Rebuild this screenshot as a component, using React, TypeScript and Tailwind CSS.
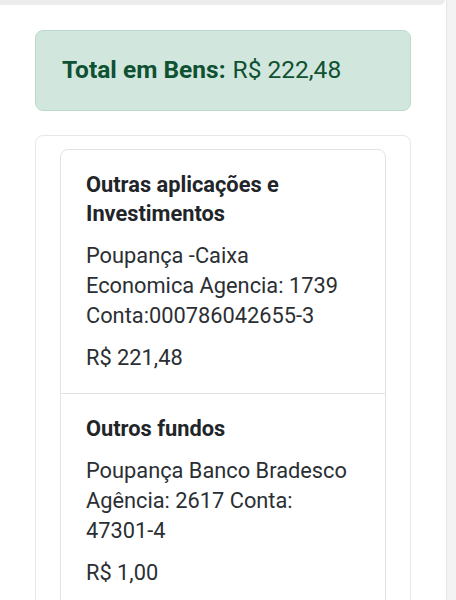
import { type FC } from 'react';

type Bem = {
    tipo: string;
    descricao: string;
    valor: string;
};

const bens: Bem[] = [
    {
        tipo: 'Outras aplicações e Investimentos',
        descricao: 'Poupança -Caixa Economica Agencia: 1739 Conta:000786042655-3',
        valor: 'R$ 221,48',
    },
    {
        tipo: 'Outros fundos',
        descricao: 'Poupança Banco Bradesco Agência: 2617 Conta: 47301-4',
        valor: 'R$ 1,00',
    },
];

const BemItem: FC<{ bem: Bem }> = ({ bem }) => (
    <li className="pl-[25px] pr-[28px] pt-[20px] pb-[20px]">
        <h3 className="text-[21.8px] leading-[29px] font-bold text-[#212529] w-[230px]">
            {bem.tipo}
        </h3>
        <p className="mt-[13px] text-[21.8px] leading-[30px] text-[#2b2f33]">
            {bem.descricao}
        </p>
        <p className="mt-[12px] text-[21.8px] leading-[30px] text-[#2b2f33]">
            {bem.valor}
        </p>
    </li>
);

export default function App() {
    return (
        <div
            className="w-[456px] h-[600px] overflow-hidden flex flex-row bg-[#f3f3f3]"
            style={{ fontFamily: 'Roboto, "Noto Sans", sans-serif' }}
        >
            <main className="w-[447px] h-full bg-white border-r border-[#e6e6e6]">
                <div className="h-[5px] w-[445px] bg-[#ececec] rounded-br-lg"></div>
                <div className="px-[35px]">
                    <div className="mt-[25px] h-[81px] flex items-center px-[26px] rounded-lg border border-[#badbcc] bg-[#d1e7dd] text-[24.5px] text-[#0f5132]">
                        <span className="font-bold">Total em Bens:</span>
                        <span className="ml-[7px]">R$ 222,48</span>
                    </div>
                    <div className="mt-[24px] rounded-lg border border-[#e8e8e8] px-[24px] pt-[13px] h-[600px]">
                        <ul className="rounded-lg border border-[#e3e3e3] divide-y divide-[#e3e3e3]">
                            {bens.map((bem) => (
                                <BemItem key={bem.tipo} bem={bem} />
                            ))}
                        </ul>
                    </div>
                </div>
            </main>
        </div>
    );
}
